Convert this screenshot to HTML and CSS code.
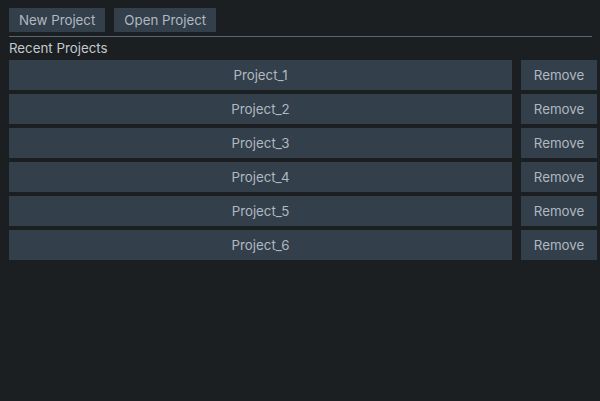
FILE: index.html
```html
<!DOCTYPE html>
<html>
<head>
<meta charset="utf-8">
<link rel="stylesheet" href="styles.css">
</head>
<body>
<div class="app">
  <div class="toolbar">
    <button class="btn">New Project</button>
    <button class="btn">Open Project</button>
  </div>
  <div class="sep"></div>
  <div class="label">Recent Projects</div>
  <div class="list">
    <div class="row"><button class="btn proj">Project_1</button><button class="btn rm">Remove</button></div>
    <div class="row"><button class="btn proj">Project_2</button><button class="btn rm">Remove</button></div>
    <div class="row"><button class="btn proj">Project_3</button><button class="btn rm">Remove</button></div>
    <div class="row"><button class="btn proj">Project_4</button><button class="btn rm">Remove</button></div>
    <div class="row"><button class="btn proj">Project_5</button><button class="btn rm">Remove</button></div>
    <div class="row"><button class="btn proj">Project_6</button><button class="btn rm">Remove</button></div>
  </div>
</div>
</body>
</html>
```

FILE: styles.css
```css
html, body {
  margin: 0;
  padding: 0;
  background: #1b1f22;
  width: 600px;
  height: 401px;
  overflow: hidden;
}
.app {
  box-sizing: border-box;
  height: 401px;
  padding: 8px 3px 0 9px;
  font-family: Inter, "Noto Sans", sans-serif;
  font-size: 13.3px;
  color: #c3c9cf;
  border-left: 1px solid #15181a;
  margin-left: -1px;
}
.toolbar {
  display: flex;
  gap: 9px;
}
.btn {
  border: none;
  margin: 0;
  background: #333f4b;
  color: #b0b8c1;
  font-family: inherit;
  font-size: 13.3px;
  height: 24px;
  padding: 0 10px;
  line-height: 24px;
}
.sep {
  height: 1px;
  background: #56677a;
  margin: 4px 5px 0 0;
}
.label {
  height: 23px;
  line-height: 23px;
  color: #c3c9cf;
}
.list {
  display: flex;
  flex-direction: column;
  gap: 4px;
}
.row {
  display: flex;
  gap: 9px;
}
.row .btn {
  height: 30px;
  line-height: 30px;
}
.proj {
  width: 503px;
}
.rm {
  width: 76px;
  padding: 0;
}
```
